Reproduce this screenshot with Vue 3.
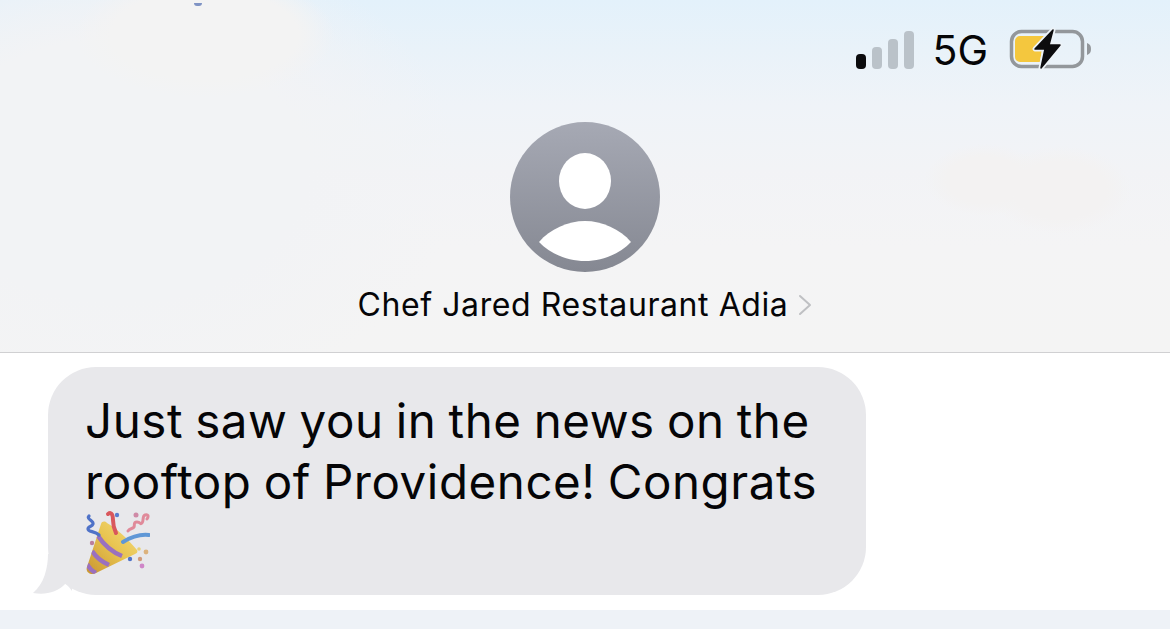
<script setup>
const name = 'Chef Jared Restaurant Adia'
const lines = ['Just saw you in the news on the', 'rooftop of Providence! Congrats']
</script>

<template>
  <div class="screen">
    <header class="head">
      <span class="speck"></span>
      <div class="status">
        <svg class="signal" width="58" height="38" viewBox="0 0 58 38">
          <rect x="0" y="23" width="10" height="15" rx="4" fill="#0b0b0d" />
          <rect x="16" y="16" width="10" height="22" rx="4" fill="#bac2c9" />
          <rect x="32" y="8" width="10" height="30" rx="4" fill="#bac2c9" />
          <rect x="48" y="0" width="10" height="38" rx="4" fill="#bac2c9" />
        </svg>
        <span class="net">5G</span>
        <svg class="battery" width="84" height="44" viewBox="0 0 84 44">
          <rect x="3.5" y="4.5" width="71" height="35" rx="10" fill="none" stroke="#93979b" stroke-width="3.5" />
          <path d="M12 9h26l-4 13-2 13H12a5 5 0 0 1-5-5V14a5 5 0 0 1 5-5z" fill="#f4c73e" />
          <path d="M79 16c3 1 4 3 4 6s-1 5-4 6z" fill="#93979b" />
          <path d="M45 3L27 22h10l-4 19 19-23H41z" fill="#0c0c0e" stroke="#edf3f8" stroke-width="5" stroke-linejoin="round" />
          <path d="M45 3L27 22h10l-4 19 19-23H41z" fill="#0c0c0e" stroke="#0c0c0e" stroke-width="1.5" stroke-linejoin="round" />
        </svg>
      </div>
      <div class="avatar">
        <svg width="150" height="150" viewBox="0 0 150 150">
          <defs>
            <linearGradient id="ag" x1="0" y1="0" x2="0" y2="1">
              <stop offset="0" stop-color="#a6a9b4" />
              <stop offset="1" stop-color="#858892" />
            </linearGradient>
          </defs>
          <circle cx="75" cy="75" r="75" fill="url(#ag)" />
          <ellipse cx="75" cy="59" rx="26" ry="28" fill="#fff" />
          <path d="M29 120C40 107 58 99 75 99s35 8 46 21c-11 12-29 19-46 19s-35-7-46-19z" fill="#fff" />
        </svg>
      </div>
      <div class="name">
        <span>{{ name }}</span>
        <svg width="14" height="22" viewBox="0 0 14 22">
          <path d="M2 2l10 9-10 9" fill="none" stroke="#bfc0c3" stroke-width="2" stroke-linecap="round" stroke-linejoin="round" />
        </svg>
      </div>
    </header>

    <main class="thread">
      <div class="bubble">
        <svg class="tail" width="40" height="42" viewBox="0 0 40 42">
          <path d="M16 0C16 14 12 30 1 39c12 2 24 0 33-10l6 8V0z" fill="#e8e8eb" />
        </svg>
        <p v-for="l in lines" :key="l" class="line">{{ l }}</p>
        <svg class="party" width="66" height="66" viewBox="0 0 66 66">
          <defs>
            <linearGradient id="cone" x1="0" y1="1" x2="1" y2="0">
              <stop offset="0" stop-color="#c9952f" />
              <stop offset=".55" stop-color="#e9c552" />
              <stop offset="1" stop-color="#f3dc7c" />
            </linearGradient>
            <clipPath id="coneclip">
              <path d="M3 58L17 15c1-3 4-3 6-1 8 4 22 17 30 27 1 2 0 3-2 4L12 64c-5 3-11-1-9-6z" />
            </clipPath>
          </defs>
          <path d="M3 58L17 15c1-3 4-3 6-1 8 4 22 17 30 27 1 2 0 3-2 4L12 64c-5 3-11-1-9-6z" fill="url(#cone)" />
          <g clip-path="url(#coneclip)" fill="none" stroke="#9a70bf" stroke-width="4.5">
            <path d="M14 27c6 9 14 16 24 20" />
            <path d="M8 42c4 6 10 11 17 14" />
            <path d="M3 55c2 4 5 7 9 9" />
          </g>
          <path d="M5 7c-3 3 5 5 4 8-1 3-5 2-5 5 0 3 7 2 11 6" fill="none" stroke="#4f72c8" stroke-width="3.2" stroke-linecap="round" />
          <path d="M24 5c4-3 5 2 5 6s1 9 3 13" fill="none" stroke="#d9575c" stroke-width="4" stroke-linecap="round" />
          <path d="M39 33c8-5 17-8 26-7" fill="none" stroke="#5f97d6" stroke-width="4" stroke-linecap="round" />
          <path d="M44 22c2-3 5-2 6-4s-1-5 3-5 3 3 5 1 0-7 3-8 4 1 2 4" fill="none" stroke="#e08a9a" stroke-width="3" stroke-linecap="round" />
          <circle cx="33" cy="6" r="2.2" fill="#5b7ed0" />
          <circle cx="52" cy="6" r="2.5" fill="#cf8aa6" />
          <circle cx="8" cy="34" r="2.2" fill="#bb7f9c" />
          <circle cx="46" cy="50" r="2.2" fill="#4f72c8" />
          <circle cx="55" cy="40" r="1.8" fill="#e8d177" />
          <circle cx="62" cy="43" r="2.4" fill="#dcb27d" />
          <circle cx="56" cy="50" r="2.2" fill="#d09a7a" />
          <circle cx="58" cy="57" r="2.4" fill="#cf86c8" />
        </svg>
      </div>
    </main>

    <footer class="foot"></footer>
  </div>
</template>

<style>
html, body { margin: 0; background: #fff; }
</style>

<style scoped>
.screen {
  width: 1170px;
  height: 629px;
  overflow: hidden;
  display: flex;
  flex-direction: column;
  font-family: Inter, "Liberation Sans", sans-serif;
  color: #050507;
}
.head {
  position: relative;
  height: 353px;
  flex: none;
  box-sizing: border-box;
  border-bottom: 1px solid #d0d0d2;
  display: flex;
  flex-direction: column;
  align-items: center;
  background:
    radial-gradient(ellipse 130px 62px at 205px 35px, #f3f3f3 72%, rgba(243,243,243,0) 100%),
    radial-gradient(ellipse 60px 36px at 985px 180px, #f3f2f2 65%, rgba(243,242,242,0) 100%),
    radial-gradient(ellipse 72px 44px at 1060px 190px, #f3f2f2 65%, rgba(243,242,242,0) 100%),
    radial-gradient(ellipse 340px 240px at 120px 170px, #f2f3f5 55%, rgba(242,243,245,0) 100%),
    linear-gradient(180deg, #e3f1fb 0%, #e9f2f9 14%, #eff3f8 30%, #f2f3f6 48%, #f4f4f5 70%, #f4f4f4 100%);
}
.speck {
  position: absolute;
  left: 194px;
  top: 3px;
  width: 8px;
  height: 3px;
  background: #7f93c4;
  border-radius: 0 0 4px 4px;
}
.status {
  position: relative;
  box-sizing: border-box;
  width: 100%;
  height: 44px;
  margin-top: 27px;
  padding-right: 78px;
  display: flex;
  justify-content: flex-end;
  align-items: center;
  gap: 20px;
}
.signal {
  margin-top: 1px;
  margin-right: -2px;
}
.net {
  font-size: 41px;
  font-weight: 400;
  line-height: 44px;
  margin-top: 2px;
}
.avatar {
  position: relative;
  width: 150px;
  height: 150px;
  margin-top: 51px;
}
.avatar svg { display: block; }
.name {
  position: relative;
  margin-top: 14px;
  display: flex;
  align-items: center;
  gap: 10px;
  font-size: 32px;
  line-height: 38px;
  letter-spacing: 0.58px;
}
.thread {
  flex: 1;
  background: #fff;
  padding: 14px 0 15px 48px;
  display: flex;
  align-items: flex-start;
}
.bubble {
  position: relative;
  box-sizing: border-box;
  width: 818px;
  height: 228px;
  padding: 23px 37px 0;
  background: #e8e8eb;
  border-radius: 48px;
}
.tail {
  position: absolute;
  left: -16px;
  bottom: -1px;
}
.line {
  margin: 0;
  font-size: 47.5px;
  line-height: 61px;
  letter-spacing: 0.55px;
  word-spacing: -1.75px;
  white-space: nowrap;
}
.party {
  position: absolute;
  left: 36px;
  top: 142px;
}
.foot {
  height: 19px;
  flex: none;
  background: #eef2f7;
}
</style>
